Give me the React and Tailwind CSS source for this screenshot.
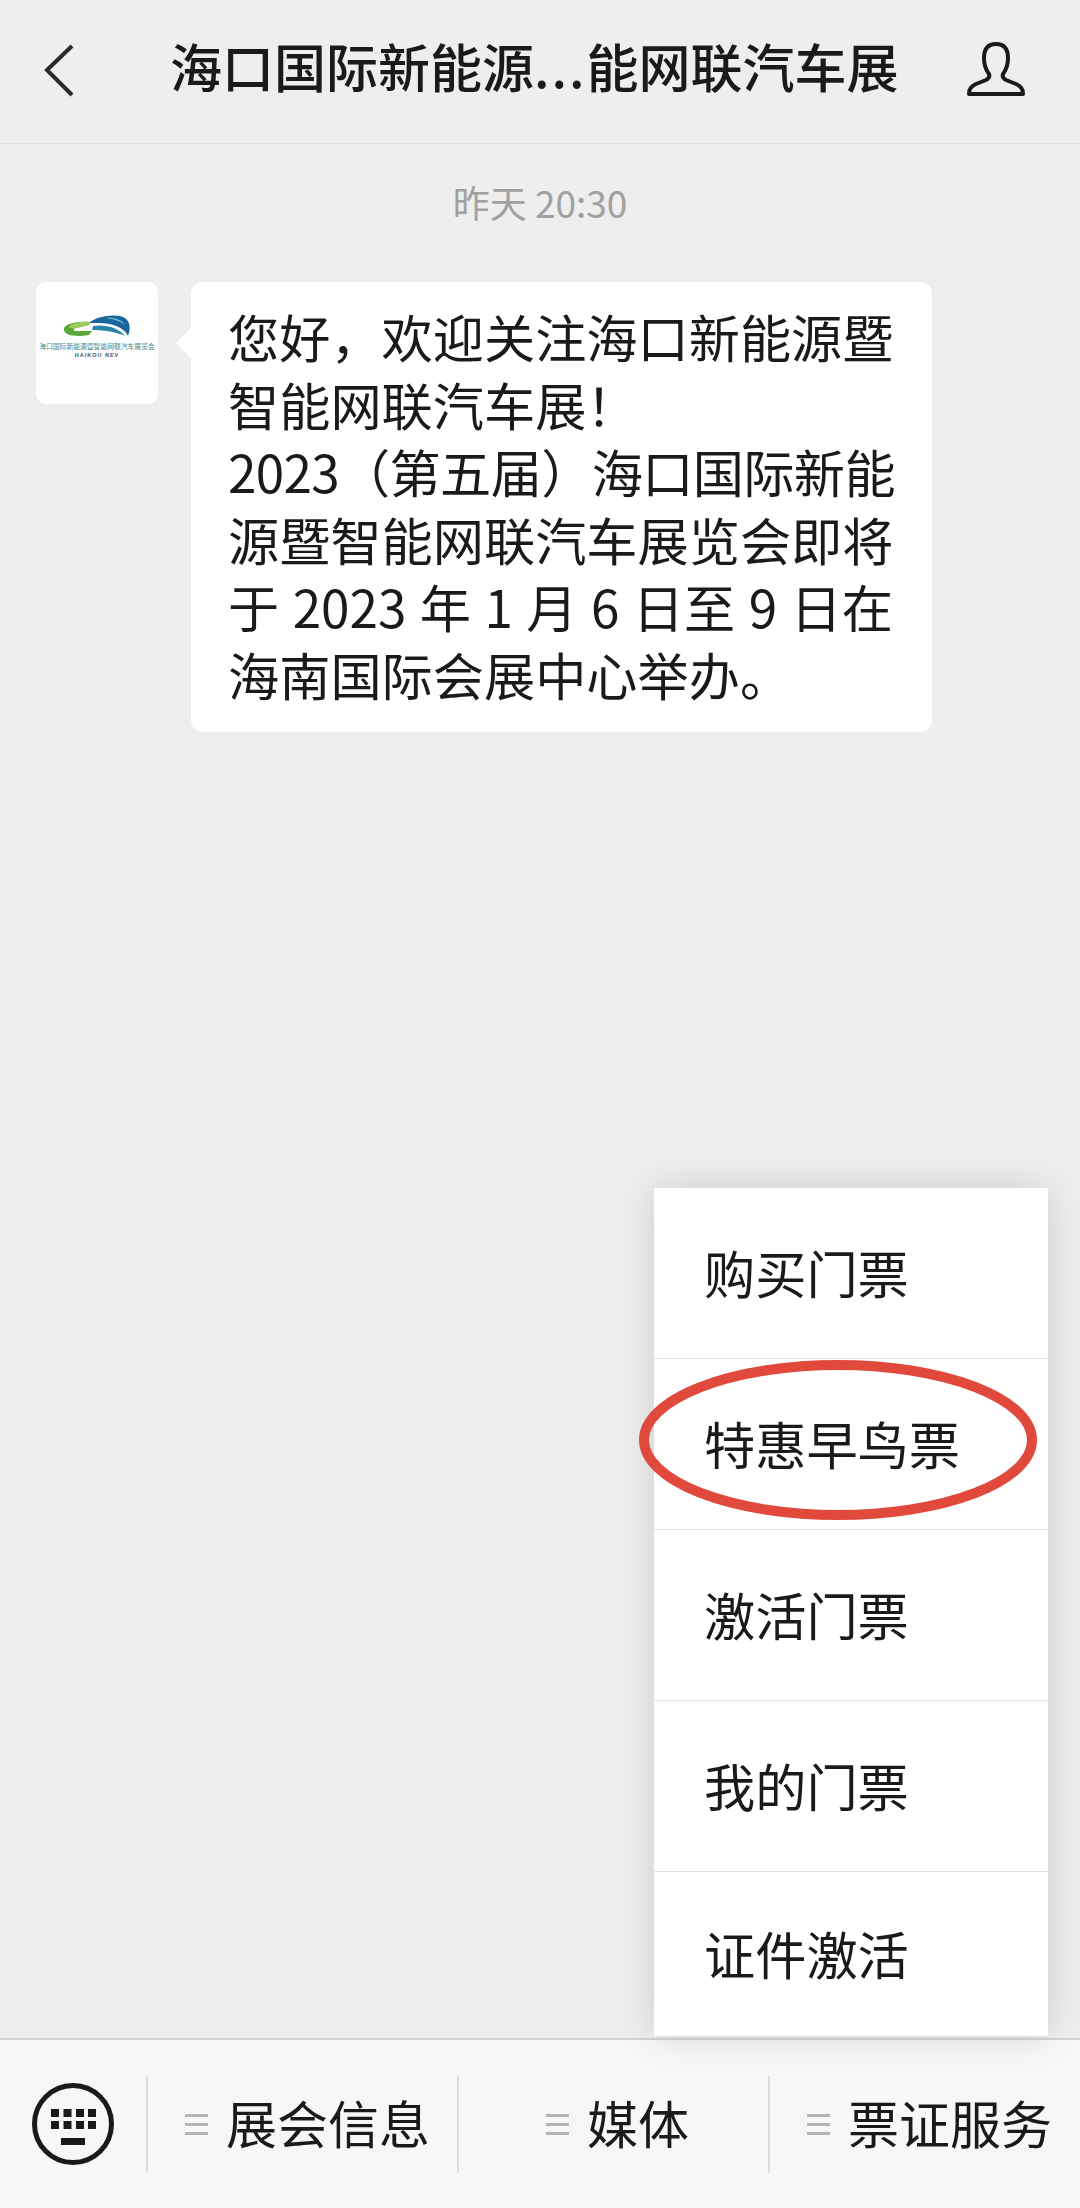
const FONT = { fontFamily: '"Noto Sans CJK SC", "Noto Sans", sans-serif' };

const lines = [
  { t: '您好，欢迎关注海口新能源暨', c: '' },
  { t: '智能网联汽车展！', c: '' },
  { t: '2023（第五届）海口国际新能', c: 'tracking-[-0.65px]' },
  { t: '源暨智能网联汽车展览会即将', c: '' },
  { t: '于 2023 年 1 月 6 日至 9 日在', c: '[word-spacing:2px]' },
  { t: '海南国际会展中心举办。', c: '' },
];

const menu = ['购买门票', '特惠早鸟票', '激活门票', '我的门票', '证件激活'];

function Logo() {
  return (
    <div className="w-[122px] h-[122px] shrink-0 bg-white rounded-[10px] flex flex-col items-center pt-[32px] overflow-hidden">
      <svg width="70" height="24" viewBox="0 0 70 24" className="shrink-0">
        <path d="M28 8 C14 7 1 10 2 16 C3 22 15 23 27 21 L30 17 L15 17 C11 17 10 15 14 14 L27 11 Z" fill="#5aa83a" />
        <path d="M14 14 L27 11 L28 8 C20 7 11 9 7 12 C6 14 10 15 14 14 Z" fill="#9ccb5c" />
        <path d="M27 9 C33 3 48 0 58 2 C67 4 70 12 66 22 C62 13 50 9 36 9 C33 9 30 9 27 9 Z" fill="#1b679c" />
        <path d="M31 12 C44 10 57 14 63 22 C54 18 42 16 30 16 Z" fill="#2a86a8" />
        <path d="M44 4 C52 3 60 6 63 11 C58 7 52 5 44 4 Z" fill="#7cc6d6" />
      </svg>
      <div className="text-[6.8px] leading-[10px] text-[#3f8a95] whitespace-nowrap mt-[3px]">海口国际新能源暨智能网联汽车展览会</div>
      <div className="text-[5.5px] leading-[8px] font-bold tracking-[1px] text-[#35586a] whitespace-nowrap" style={{ fontFamily: '"Liberation Sans", sans-serif' }}>HAIKOU NEV</div>
    </div>
  );
}

function Burger() {
  return (
    <span className="flex flex-col gap-[6px] w-[23px] shrink-0">
      <span className="h-[3px] bg-[#b5b5b5]" />
      <span className="h-[3px] bg-[#b5b5b5]" />
      <span className="h-[3px] bg-[#b5b5b5]" />
    </span>
  );
}

function Tab({ label, className, gap }) {
  return (
    <div className={`flex items-center h-[97px] border-l-2 border-[#dcdcdc] ${className}`}>
      <Burger />
      <span className={`text-[51px] leading-[60px] mb-[5px] text-[#1a1a1a] whitespace-nowrap ${gap}`}>{label}</span>
    </div>
  );
}

export default function App() {
  return (
    <div className="relative w-[1080px] h-[2208px] flex flex-col bg-[#eeeeee] overflow-hidden" style={FONT}>
      <header className="h-[144px] shrink-0 flex items-start border-b border-[#e2e2e2]">
        <svg width="30" height="54" viewBox="0 0 30 54" className="ml-[44px] mt-[43px] shrink-0" fill="none" stroke="#2a2a2a" strokeWidth="4">
          <path d="M28 3 L3 27 L28 52" />
        </svg>
        <div className="ml-[96px] w-[730px] mt-[31px] text-[52px] leading-[70px] font-medium text-[#1a1a1a] whitespace-nowrap">
          海口国际新能源<span className="tracking-[2px]">...</span>能网联汽车展
        </div>
        <svg width="60" height="58" viewBox="0 0 60 58" className="ml-[66px] mt-[41px] shrink-0" fill="none" stroke="#1a1a1a" strokeWidth="4" strokeLinejoin="round">
          <path d="M3 53 C3 47 6 45 10 43 L20 39 C23 37.5 24 36 23 33 C20 29 18 23 18 17 C18 8 22 3 30 3 C38 3 42 8 42 17 C42 23 40 29 37 33 C36 36 37 37.5 40 39 L50 43 C54 45 57 47 57 53 Z" />
        </svg>
      </header>

      <main className="flex-1 flex flex-col min-h-0">
        <div className="mt-[34px] h-[48px] flex items-center justify-center text-[37px] leading-[48px] text-[#a0a0a0]">昨天 20:30</div>
        <div className="flex items-start ml-[36px] mt-[56px]">
          <Logo />
          <div className="relative ml-[33px] w-[741px] h-[450px] bg-white rounded-[12px] pl-[37px] py-[21px]">
            <span className="absolute left-[-15px] top-[45px] w-0 h-0 border-y-[16px] border-y-transparent border-r-[16px] border-r-white" />
            {lines.map((l) => (
              <div key={l.t} className={`text-[51.2px] leading-[67.6px] text-[#1a1a1a] whitespace-nowrap ${l.c}`}>{l.t}</div>
            ))}
          </div>
        </div>
      </main>

      <footer className="h-[170px] shrink-0 bg-[#f7f7f7] border-t-2 border-[#d4d4d4] flex items-center">
        <svg width="84" height="84" viewBox="0 0 84 84" className="ml-[31px] shrink-0">
          <circle cx="42" cy="42" r="38.5" fill="none" stroke="#1a1a1a" strokeWidth="5" />
          {[20, 32.5, 45, 57].map((x) => (
            <g key={x} fill="#1a1a1a">
              <rect x={x} y="27" width="8" height="8" />
              <rect x={x} y="39" width="8" height="8" />
            </g>
          ))}
          <rect x="30" y="56" width="24" height="7" fill="#1a1a1a" />
        </svg>
        <Tab label="展会信息" className="ml-[31px] w-[311px] pl-[37px]" gap="ml-[18px]" />
        <Tab label="媒体" className="w-[311px] pl-[87px]" gap="ml-[18px]" />
        <Tab label="票证服务" className="flex-1 pl-[37px]" gap="ml-[18px]" />
      </footer>

      <div className="absolute left-[654px] top-[1188px] w-[394px] h-[848px] bg-white shadow-[0_0_36px_rgba(0,0,0,0.14)] flex flex-col">
        {menu.map((m, i) => (
          <div
            key={m}
            className={`flex items-center pl-[50px] text-[51.2px] leading-[68px] text-[#1a1a1a] whitespace-nowrap ${i < menu.length - 1 ? 'h-[171px] shrink-0 border-b border-[#e4e4e4] pb-[3px]' : 'flex-1 pb-[2px]'}`}
          >
            {m}
          </div>
        ))}
      </div>

      <svg width="410" height="170" viewBox="0 0 410 170" className="absolute left-[634px] top-[1355px]" fill="none">
        <ellipse cx="204" cy="85" rx="194" ry="75" stroke="#e0493b" strokeWidth="10" />
      </svg>
    </div>
  );
}
